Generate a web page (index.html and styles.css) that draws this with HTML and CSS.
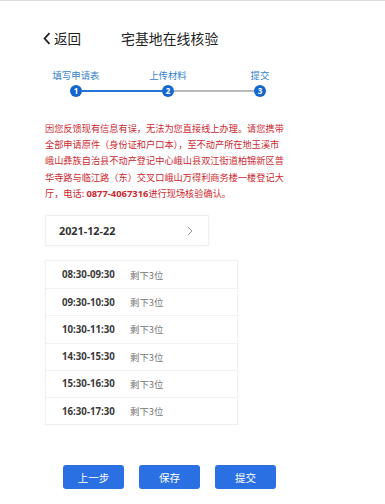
FILE: index.html
```html
<!DOCTYPE html>
<html lang="zh">
<head>
<meta charset="utf-8">
<link rel="stylesheet" href="styles.css">
</head>
<body>
<div class="page">
  <header class="header">
    <div class="back">
      <svg class="chev" width="8" height="13" viewBox="0 0 8 13"><path d="M6.5 1.2 L1.6 6.5 L6.5 11.8" fill="none" stroke="#222" stroke-width="1.8"/></svg>
      <span>返回</span>
    </div>
    <div class="title">宅基地在线核验</div>
  </header>

  <div class="steps">
    <div class="labels">
      <span>填写申请表</span>
      <span>上传材料</span>
      <span>提交</span>
    </div>
    <div class="track">
      <span class="dot">1</span>
      <span class="seg seg-on"></span>
      <span class="dot">2</span>
      <span class="seg"></span>
      <span class="dot">3</span>
    </div>
  </div>

  <div class="notice">
    <span class="line">因您反馈现有信息有误，无法为您直接线上办理。请您携带</span>
    <span class="line">全部申请原件（身份证和户口本），至不动产所在地玉溪市</span>
    <span class="line">峨山彝族自治县不动产登记中心峨山县双江街道柏锦新区普</span>
    <span class="line">华寺路与临江路（东）交叉口峨山万得利商务楼一楼登记大</span>
    <span class="line"><span>厅，电话:&nbsp;</span><b>0877-4067316</b><span>进行现场核验确认。</span></span>
  </div>

  <div class="date">
    <span>2021-12-22</span>
    <svg width="6" height="10" viewBox="0 0 6 10"><path d="M1 1 L5 5 L1 9" fill="none" stroke="#999" stroke-width="1"/></svg>
  </div>

  <ul class="slots">
    <li><span class="time">08:30-09:30</span><span class="left">剩下3位</span></li>
    <li><span class="time">09:30-10:30</span><span class="left">剩下3位</span></li>
    <li><span class="time">10:30-11:30</span><span class="left">剩下3位</span></li>
    <li><span class="time">14:30-15:30</span><span class="left">剩下3位</span></li>
    <li><span class="time">15:30-16:30</span><span class="left">剩下3位</span></li>
    <li><span class="time">16:30-17:30</span><span class="left">剩下3位</span></li>
  </ul>

  <div class="actions">
    <button class="btn">上一步</button>
    <button class="btn">保存</button>
    <button class="btn">提交</button>
  </div>
</div>
</body>
</html>
```
FILE: styles.css
```css
* { box-sizing: border-box; margin: 0; padding: 0; }
html, body { background: #fff; }
body {
  font-family: "Noto Sans", "Noto Sans CJK SC", sans-serif;
  color: #222;
  width: 385px;
  height: 504px;
  overflow: hidden;
}
.page {
  border-top: 1px solid #dcdcdc;
  padding-left: 45px;
}
.header {
  display: flex;
  align-items: center;
  height: 24px;
  margin-top: 25px;
}
.back {
  display: flex;
  align-items: center;
  gap: 3px;
  font-size: 13.5px;
  color: #222;
  margin-left: -2px;
}
.chev { display: block; }
.title {
  margin-left: 40px;
  font-size: 13.8px;
  color: #222;
  letter-spacing: 0.1px;
}
.steps {
  margin-left: -15px;
  margin-top: 20px;
}
.labels {
  display: flex;
}
.labels span {
  width: 92px;
  text-align: center;
  font-size: 9.4px;
  line-height: 12px;
  color: #3583cc;
}
.track {
  display: flex;
  align-items: center;
  margin-top: 3px;
  padding-left: 40px;
}
.dot {
  width: 12px;
  height: 12px;
  border-radius: 50%;
  background: #1467cc;
  color: #fff;
  font-size: 8px;
  font-weight: 700;
  line-height: 12px;
  text-align: center;
}
.seg {
  width: 80px;
  height: 1.5px;
  background: #b9b9b9;
}
.seg-on { background: #2275d6; }
.notice {
  margin-top: 23px;
  font-size: 9.2px;
  line-height: 16.2px;
  color: #cc2830;
  font-family: "Noto Sans CJK SC", "Noto Sans", sans-serif;
}
.line {
  display: block;
  white-space: nowrap;
}
.notice b {
  font-family: "Noto Sans", "Noto Sans CJK SC", sans-serif;
  font-weight: 700;
  font-size: 9.4px;
}
.date {
  width: 164px;
  height: 31px;
  margin-top: 13px;
  display: flex;
  align-items: center;
  justify-content: space-between;
  padding: 0 15px 0 13px;
  border: 1px solid #f0f0f0;
  box-shadow: 0 0 3px rgba(0,0,0,0.05);
  font-size: 10.8px;
  font-weight: 700;
  color: #333;
}
.slots {
  list-style: none;
  width: 193px;
  margin-top: 14px;
  border: 1px solid #f0f0f0;
  box-shadow: 0 0 3px rgba(0,0,0,0.04);
}
.slots li {
  display: flex;
  align-items: center;
  height: 27.2px;
  border-top: 1px solid #f2f2f2;
  padding-left: 16px;
}
.slots li:first-child { border-top: none; }
.time {
  width: 68px;
  font-size: 9.7px;
  font-weight: 700;
  color: #3a3a3a;
}
.left {
  font-size: 9.4px;
  color: #777;
  font-family: "Noto Sans CJK SC", "Noto Sans", sans-serif;
}
.actions {
  display: flex;
  gap: 15px;
  margin-top: 40px;
  padding-left: 18px;
}
.btn {
  width: 61px;
  height: 24px;
  border: none;
  border-radius: 3px;
  background: #2a70e3;
  color: #fff;
  font-size: 10.5px;
  font-family: "Noto Sans CJK SC", sans-serif;
}
```
